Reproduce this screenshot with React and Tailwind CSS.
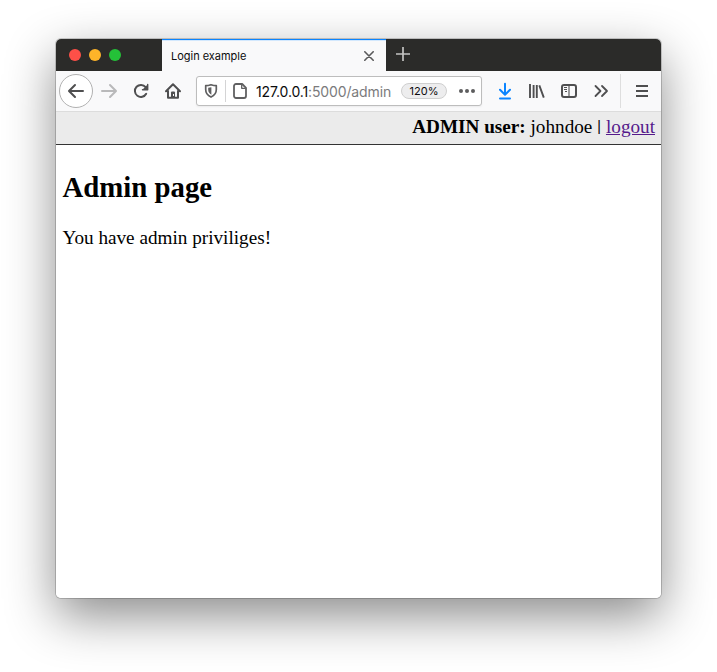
const Icon = ({ children, className = "text-[#4f4f50]" }) => (
  <span className={`flex h-8 w-8 shrink-0 items-center justify-center ${className}`}>
    <svg width="18" height="18" viewBox="0 0 18 18" fill="none" stroke="currentColor" strokeWidth="2" strokeLinecap="round" strokeLinejoin="round">
      {children}
    </svg>
  </span>
);

function TabBar() {
  return (
    <div className="flex h-8 bg-[#2b2b29]">
      <div className="flex w-[106px] items-center gap-2 pl-[13px]">
        <span className="h-3 w-3 rounded-full bg-[#fe5048]" />
        <span className="h-3 w-3 rounded-full bg-[#feb429]" />
        <span className="h-3 w-3 rounded-full bg-[#24c138]" />
      </div>
      <div className="flex w-[224px] flex-col bg-[#f9f9fa]">
        <div className="h-px shrink-0 bg-[#0a84ff]" />
        <div className="h-px shrink-0 bg-[#d3e8fd]" />
        <div className="flex h-[29px] items-center justify-between pl-[9px] pr-[12px]">
          <span className="font-[Inter,sans-serif] text-[11px] leading-4 tracking-[-0.02px] text-[#0c0c0d]">Login example</span>
          <svg width="10" height="10" viewBox="0 0 10 10" stroke="#5a5a5b" strokeWidth="1.6" strokeLinecap="round">
            <path d="M.8.8l8.4 8.4M9.2.8L.8 9.2" />
          </svg>
        </div>
      </div>
      <svg className="ml-[10px] mt-2" width="14" height="14" viewBox="0 0 14 14" stroke="#c4c4c2" strokeWidth="1.7">
        <path d="M7 0v14M0 7h14" />
      </svg>
    </div>
  );
}

function AddressBar() {
  return (
    <div className="ml-[7px] flex h-[30px] w-[286px] items-center rounded-[3px] border border-[#bdbdbd] bg-white shadow-[0_1px_2px_rgba(0,0,0,0.06)]">
      <svg className="ml-[7px]" width="14" height="16" viewBox="0 0 14 16" fill="none" stroke="#606061" strokeWidth="1.7" strokeLinejoin="round">
        <path d="M7 1.7C5.3 2.200 3.400 2.600 1.700 2.700v4.100c0 3.700 2 5.800 5.300 7.300 3.300-1.500 5.300-3.600 5.300-7.300V2.700C10.600 2.600 8.700 2.200 7 1.700z" />
        <path d="M7.400 4.200v7.600C5.300 10.500 4.200 9 4.200 6.800V4.800z" fill="#606061" stroke="none" />
      </svg>
      <span className="ml-[7px] h-[22px] w-px bg-[#d4d4d5]" />
      <svg className="ml-[7px]" width="14" height="16" viewBox="0 0 14 16" fill="none" stroke="#606061" strokeWidth="1.8" strokeLinejoin="round">
        <path d="M3 1h6.200L13 4.800V13a2 2 0 0 1-2 2H3a2 2 0 0 1-2-2V3a2 2 0 0 1 2-2z" />
        <path d="M8.700 1.200v4.100h4" strokeWidth="1.3" />
      </svg>
      <span className="ml-[9px] mt-[2px] w-[136px] whitespace-nowrap font-[Inter,sans-serif] text-[14px] leading-5 tracking-[-0.13px] text-[#7b7b7c]">
        <span className="text-[#0c0c0d]">127.0.0.1</span>:5000/admin
      </span>
      <span className="ml-[9px] flex h-4 w-[46px] items-center justify-center rounded-full border border-[#cfcfcf] bg-[#ededee] font-[Inter,sans-serif] text-[11px] leading-none text-[#0c0c0d]">
        120%
      </span>
      <svg className="ml-[12px]" width="16" height="4" viewBox="0 0 16 4" fill="#5d5d5e">
        <circle cx="2" cy="2" r="2" />
        <circle cx="8" cy="2" r="2" />
        <circle cx="14" cy="2" r="2" />
      </svg>
    </div>
  );
}

function Toolbar() {
  return (
    <div className="flex h-[41px] items-center border-b border-[#dcdcdc] bg-[#f9f9fa] pl-[3px]">
      <span className="flex h-[34px] w-[34px] items-center justify-center rounded-full border border-[#b1b1b1] bg-white">
        <Icon><path d="M16 9H2.200M8 3L2 9l6 6" /></Icon>
      </span>
      <Icon className="text-[#b9b9ba]"><path d="M2 9h13.800M10 3l6 6-6 6" /></Icon>
      <Icon>
        <path d="M13.600 5.200A6 6 0 1 0 14.200 11.800" />
        <path d="M15.800 2.300v5.500h-5.500z" fill="currentColor" stroke="none" />
        <path d="M15.700 2.500v5.200h-5.200" strokeWidth="1.400" />
      </Icon>
      <Icon>
        <path d="M2 9.300L9 2.300l7 7M4 9v6.800h10V9" />
        <path d="M7 16v-5.500a1 1 0 0 1 1-1h2a1 1 0 0 1 1 1V16z" fill="currentColor" stroke="none" />
        <path d="M9.500 12v2" stroke="#f9f9fa" strokeWidth="1" strokeLinecap="butt" />
      </Icon>
      <AddressBar />
      <div className="ml-[7px] flex">
        <Icon className="text-[#0a84ff]"><path d="M9 1.800v10.500M4 7.800l5 5 5-5M4 16.500h10" /></Icon>
        <Icon><path d="M2 2v14M5.600 3v13M8.800 3v13M11.300 3.300L15.800 15.600" strokeLinecap="butt" strokeWidth="1.900" /></Icon>
        <Icon>
          <rect x="2" y="3" width="14" height="12" rx="2" />
          <path d="M9 3v12M4 5.500h3M4 7.500h3M5 9.500h2" strokeWidth="1.100" strokeLinecap="butt" />
        </Icon>
        <Icon><path d="M3.500 4l5 5-5 5M10 4l5 5-5 5" strokeWidth="1.800" /></Icon>
      </div>
      <span className="ml-[3px] h-[34px] w-px bg-[#dedede]" />
      <span className="ml-[5px]">
        <Icon><path d="M3 4h12M3 9h12M3 14h12" strokeLinecap="butt" /></Icon>
      </span>
    </div>
  );
}

export default function App() {
  return (
    <div className="h-[672px] w-[717px] overflow-hidden bg-white pl-[56px] pt-[39px]">
      <div className="h-[559px] w-[605px] rounded-[5px] shadow-[0_0_0_1px_rgba(0,0,0,0.18),0_18px_50px_rgba(0,0,0,0.46)]">
        <div className="h-full overflow-hidden rounded-[5px] bg-white font-['Liberation_Serif',serif] text-black">
          <TabBar />
          <Toolbar />
          <div className="flex h-[33px] items-center justify-end border-b border-[#333] bg-[#ebebeb] pr-[6px] text-[19.200px] leading-[22px]">
            <p className="mb-[3px] whitespace-nowrap">
              <b>ADMIN user:</b> johndoe <span className="inline-block w-[4px] text-center align-[2px] font-['Liberation_Sans',sans-serif] text-[14px] leading-none">|</span> <a className="text-[#551a8b] underline">logout</a>
            </p>
          </div>
          <main className="px-[6.500px]">
            <h1 className="mt-[25px] text-[28.800px] font-bold leading-[34px]">Admin page</h1>
            <p className="mt-[23px] text-[19.200px] leading-[22px]">You have admin priviliges!</p>
          </main>
        </div>
      </div>
    </div>
  );
}
